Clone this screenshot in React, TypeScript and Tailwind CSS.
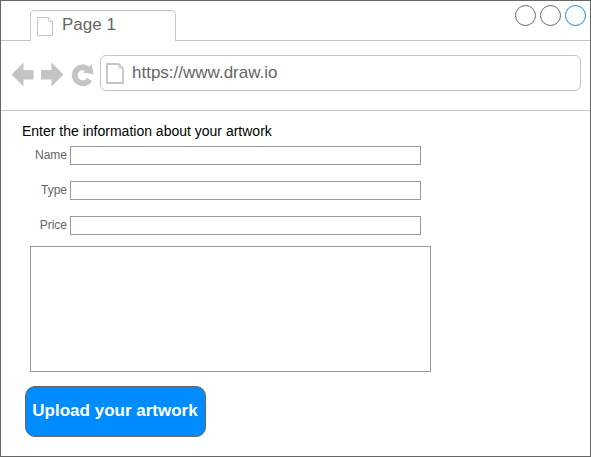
const rows = ["Name", "Type", "Price"];

function TabPageIcon() {
  return (
    <svg viewBox="36 16 18 21" fill="none" stroke="#c4c4c4" strokeWidth={1} className="mt-[5px] h-[21px] w-[18px]">
      <path d="M37.5 17.5H48.5L52.5 21.5V35.5H37.5Z" />
      <path d="M48.5 17.5V21.5H52.5" strokeWidth={0.7} />
    </svg>
  );
}

function AddressPageIcon() {
  return (
    <svg viewBox="106 63 18 21" fill="none" stroke="#c4c4c4" strokeWidth={1.8} className="mt-[7px] h-[21px] w-[18px]">
      <path d="M107 64H118.6L123 68.4V83H107Z" />
      <path d="M118.8 64V68.2H123" strokeWidth={0.8} />
    </svg>
  );
}

function Header() {
  return (
    <div className="flex h-10">
      <div className="w-[29px] border-b border-[#c4c4c4]" />
      <div className="mt-[9px] flex w-[146px] rounded-t-[5px] border-x border-t border-[#c4c4c4] pl-[5px]">
        <TabPageIcon />
        <span className="ml-2 mt-px text-[17px] leading-[25px] text-[#666]">Page 1</span>
      </div>
      <div className="flex flex-1 justify-end gap-1 border-b border-[#c4c4c4] pr-1 pt-1">
        <span className="size-[21px] rounded-full border border-[#666]" />
        <span className="size-[21px] rounded-full border border-[#666]" />
        <span className="size-[21px] rounded-full border border-[#008cff]" />
      </div>
    </div>
  );
}

function Toolbar() {
  return (
    <div className="flex h-[70px] border-b border-[#c4c4c4] pl-2.5 pt-3.5">
      <svg viewBox="11 55 89 36" fill="#c4c4c4" className="h-9 w-[89px]">
        <path d="M11.5 74.5L23.5 62.5V70H33.5V79.5H23.5V86.5Z" />
        <path d="M63.5 74.5L51.5 62.5V70H41V79.5H51.5V86.5Z" />
        <path d="M88 69.2A8 8 0 1 0 89.6 79.4" fill="none" stroke="#c4c4c4" strokeWidth={5.8} />
        <path d="M91.6 64.2L93.6 74.2L83.2 72.6Z" />
      </svg>
      <div className="flex h-9 w-[481px] rounded-[6px] border border-[#c4c4c4] pl-[5px]">
        <AddressPageIcon />
        <span className="ml-2 text-[17px] leading-[33px] text-[#666]">https://www.draw.io</span>
      </div>
    </div>
  );
}

export default function App() {
  return (
    <div className="h-[457px] w-[591px] border border-[#666] bg-white font-['Liberation_Sans',Arial,sans-serif]">
      <Header />
      <Toolbar />
      <main className="pt-[9px]">
        <h1 className="ml-[21px] h-[26px] text-sm leading-[22px] text-black">Enter the information about your artwork</h1>
        <div className="flex flex-col gap-4">
          {rows.map((label) => (
            <label key={label} className="flex h-[19px]">
              <span className="w-[66px] text-right text-xs leading-[18px] text-[#666]">{label}</span>
              <input className="ml-[3px] h-[19px] w-[351px] border border-[#999] outline-none" />
            </label>
          ))}
        </div>
        <textarea className="ml-[29px] mt-[11px] block h-[126px] w-[401px] resize-none border border-[#999] outline-none" />
        <button className="ml-6 mt-3.5 block h-[51px] w-[181px] whitespace-nowrap rounded-[10px] border border-[#666] bg-[#008cff] pb-0.5 pr-px text-[17px] font-bold leading-[47px] text-white">
          Upload your artwork
        </button>
      </main>
    </div>
  );
}
